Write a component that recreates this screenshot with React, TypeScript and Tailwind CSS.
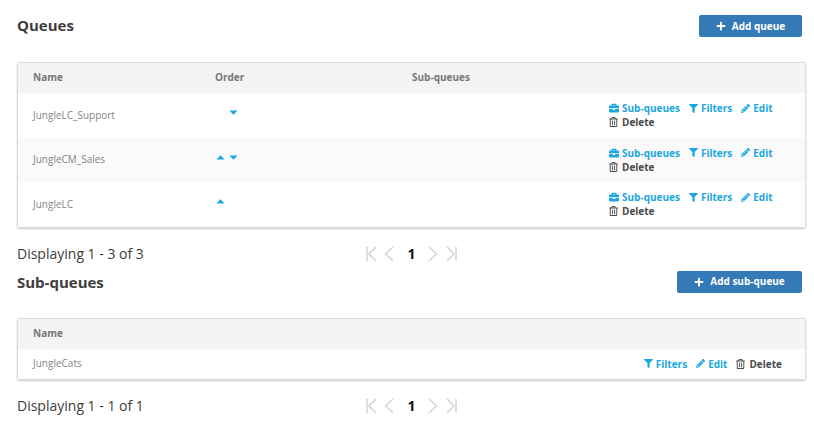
import React from 'react';
import { FaBriefcase, FaFilter, FaPencilAlt, FaPlus, FaRegTrashAlt } from 'react-icons/fa';

const CaretUp = () => (
    <svg width="9" height="5" viewBox="0 0 9 5" className="fill-[#1ba7e0]"><path d="M4.5 0.3 8.6 4.6H0.4Z" /></svg>
);

const CaretDown = () => (
    <svg width="9" height="5" viewBox="0 0 9 5" className="fill-[#1ba7e0]"><path d="M0.4 0.4H8.6L4.5 4.7Z" /></svg>
);

const Action: React.FC<{ icon: React.ReactNode; label: string; dark?: boolean }> = ({ icon, label, dark }) => (
    <span className={`flex items-center text-[10px] font-bold leading-[14px] ${dark ? 'gap-[4px] text-[#4a4a4a]' : 'gap-[3px] text-[#1ba7e0]'}`}>
        {icon}
        {label}
    </span>
);

const SubQueuesLink = () => <Action icon={<FaBriefcase className="w-[10px] h-[10px]" />} label="Sub-queues" />;
const FiltersLink = () => <Action icon={<FaFilter className="w-[9px] h-[9px]" />} label="Filters" />;
const EditLink = () => <Action icon={<FaPencilAlt className="w-[9px] h-[9px]" />} label="Edit" />;
const DeleteLink = () => <Action icon={<FaRegTrashAlt className="w-[9px] h-[10px]" />} label="Delete" dark />;

const Pager: React.FC<{ text: string }> = ({ text }) => (
    <div className="flex items-center h-[24px]">
        <span className="w-[349px] text-[14px] text-[#3c3c3c]">{text}</span>
        <div className="flex items-center text-[#d4d4d4]">
            <svg width="11" height="16" viewBox="0 0 11 16" fill="none" stroke="currentColor" strokeWidth="1.5">
                <path d="M1 1V15M10 1 3 8l7 7" />
            </svg>
            <svg width="10" height="16" viewBox="0 0 10 16" fill="none" stroke="currentColor" strokeWidth="1.5" className="ml-[7px]">
                <path d="M9 1 1.5 8 9 15" />
            </svg>
            <span className="w-[34px] pl-[1px] text-center text-[14px] font-bold text-[#111]">1</span>
            <svg width="10" height="16" viewBox="0 0 10 16" fill="none" stroke="currentColor" strokeWidth="1.5">
                <path d="M1 1l7.5 7L1 15" />
            </svg>
            <svg width="11" height="16" viewBox="0 0 11 16" fill="none" stroke="currentColor" strokeWidth="1.5" className="ml-[8px]">
                <path d="M10 1V15M1 1l7 7-7 7" />
            </svg>
        </div>
    </div>
);

const queues = [
    { name: 'JungleLC_Support', up: false, down: true },
    { name: 'JungleCM_Sales', up: true, down: true },
    { name: 'JungleLC', up: true, down: false },
];

const App: React.FC = () => {
    return (
        <div className="w-[814px] h-[429px] overflow-hidden bg-white pl-[17px] pr-[8px] pt-[15px] font-['Open_Sans',sans-serif]">
            <div className="flex items-center justify-between pr-[4px] h-[22px]">
                <h1 className="pb-[2px] text-[15px] font-bold text-[#3d3d3d]">Queues</h1>
                <button className="flex items-center justify-center gap-[6px] w-[103px] h-[22px] rounded-[2px] bg-[#337ab7] text-white text-[10px] font-bold">
                    <FaPlus className="w-[10px] h-[10px]" />
                    Add queue
                </button>
            </div>

            <div className="mt-[25px] border border-[#dcdcdc] rounded-[2px] shadow-[0_1px_2px_rgba(0,0,0,0.2)]">
                <div className="flex items-center h-[30px] bg-[#f4f4f4] pl-[15px] pb-[2px] text-[10px] font-bold text-[#777]">
                    <span className="w-[182px]">Name</span>
                    <span className="w-[197px]">Order</span>
                    <span>Sub-queues</span>
                </div>
                {queues.map((q, i) => (
                    <div key={q.name} className={`flex items-center h-[44.6px] pl-[15px] ${i === 1 ? 'bg-[#fafafa]' : 'bg-white'}`}>
                        <span className="w-[182px] text-[10px] text-[#858585]">{q.name}</span>
                        <div className="w-[394px] h-[5px] flex items-start gap-[4px] pl-[1px] -mt-[5px]">
                            {q.up ? <CaretUp /> : <span className="w-[9px]" />}
                            {q.down && <CaretDown />}
                        </div>
                        <div className="flex flex-col">
                            <div className="flex gap-[9px]">
                                <SubQueuesLink />
                                <FiltersLink />
                                <EditLink />
                            </div>
                            <DeleteLink />
                        </div>
                    </div>
                ))}
            </div>

            <div className="mt-[14px]">
                <Pager text="Displaying 1 - 3 of 3" />
            </div>

            <div className="flex items-center justify-between pr-[4px] h-[22px] mt-[5px]">
                <h2 className="text-[15px] font-bold text-[#3d3d3d]">Sub-queues</h2>
                <button className="flex items-center justify-center gap-[6px] w-[125px] h-[22px] rounded-[2px] bg-[#337ab7] text-white text-[10px] font-bold">
                    <FaPlus className="w-[10px] h-[10px]" />
                    Add sub-queue
                </button>
            </div>

            <div className="mt-[25px] border border-[#dcdcdc] rounded-[2px] shadow-[0_1px_2px_rgba(0,0,0,0.2)]">
                <div className="flex items-center h-[30px] bg-[#f4f4f4] pl-[15px] text-[10px] font-bold text-[#777]">
                    <span>Name</span>
                </div>
                <div className="flex items-center justify-between h-[30px] pl-[15px] pr-[23px] bg-white">
                    <span className="text-[10px] text-[#858585]">JungleCats</span>
                    <div className="flex gap-[9px]">
                        <FiltersLink />
                        <EditLink />
                        <DeleteLink />
                    </div>
                </div>
            </div>

            <div className="mt-[14px]">
                <Pager text="Displaying 1 - 1 of 1" />
            </div>
        </div>
    );
};

export default App;
